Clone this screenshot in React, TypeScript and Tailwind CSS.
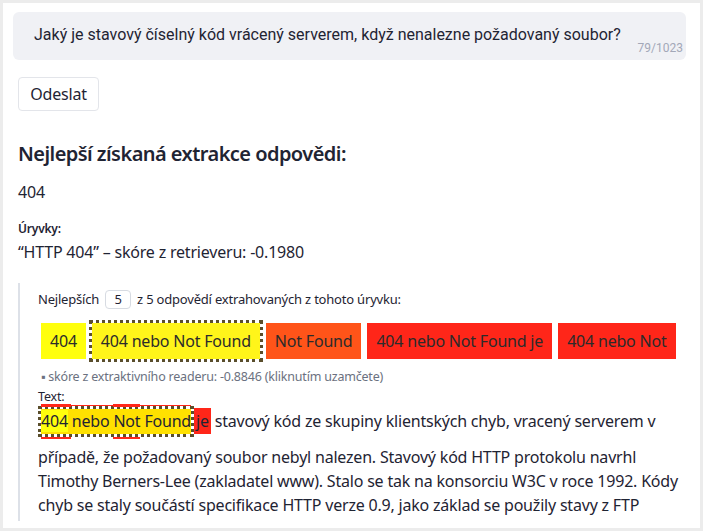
import React, { useState } from 'react';

const chips = [
  { text: '404', bg: 'bg-[#ffff0d]', sel: false },
  { text: '404 nebo Not Found', bg: 'bg-[#fff51a]', sel: true },
  { text: 'Not Found', bg: 'bg-[#ff5419]', sel: false },
  { text: '404 nebo Not Found je', bg: 'bg-[#ff2619]', sel: false },
  { text: '404 nebo Not', bg: 'bg-[#ff2619]', sel: false },
];

const App: React.FC = () => {
  const [question, setQuestion] = useState(
    'Jaký je stavový číselný kód vrácený serverem, když nenalezne požadovaný soubor?'
  );
  const [topK, setTopK] = useState('5');

  return (
    <div className="min-h-[531px] bg-[#ececec] p-[3px] font-['Noto_Sans',sans-serif] tracking-[-0.2px] text-[#1f2433]">
      <div className="h-[525px] overflow-hidden bg-white pl-[10px] pr-[14px] pt-[9px]">
        <div className="relative h-[48px] rounded-md bg-[#f0f1f5]">
          <textarea
            value={question}
            onChange={e => setQuestion(e.target.value)}
            rows={1}
            className="block h-[48px] w-full resize-none overflow-hidden bg-transparent px-[21px] pt-[11px] font-['Roboto',sans-serif] text-[16px] leading-[24px] tracking-normal text-[#1f2433] outline-none"
          />
          <span className="absolute bottom-[3px] right-[3px] font-['Roboto',sans-serif] text-[12px] tracking-normal text-[#a3a8b8]">
            {question.length}/1023
          </span>
        </div>

        <button className="ml-[5px] mt-[17px] h-[34px] w-[81px] rounded border border-[#e3e5ea] bg-white text-[16px] text-[#1f2433]">
          Odeslat
        </button>

        <div className="pl-[5px]">
          <h2 className="mt-[29px] text-[20px] font-semibold leading-[28px] tracking-[-0.55px]">
            Nejlepší získaná extrakce odpovědi:
          </h2>
          <div className="mt-[12px] text-[16px] leading-[24px]">404</div>
          <div className="mt-[16px] text-[12px] font-semibold leading-[18px]">Úryvky:</div>
          <div className="mt-[2px] text-[16px] leading-[24px]">“HTTP 404” – skóre z retrieveru: -0.1980</div>

          <div className="mt-[19px] h-[238px] overflow-hidden border-l-2 border-[#dde1e8] pl-[18px] pt-[6px]">
            <div className="flex items-center text-[13px] leading-[20px]">
              <span>Nejlepších</span>
              <input
                value={topK}
                onChange={e => setTopK(e.target.value)}
                className="mx-[6px] h-[19px] w-[26px] rounded border border-[#d7dbe2] text-center text-[13px] outline-none"
              />
              <span>z 5 odpovědí extrahovaných z tohoto úryvku:</span>
            </div>

            <div className="mt-[14px] flex">
              {chips.map((c, i) => (
                <span
                  key={i}
                  className={`mx-[3px] h-[36px] whitespace-nowrap px-[9px] text-[16px] leading-[36px] text-[#2b2b2b] ${c.bg} ${
                    c.sel ? 'outline-[3px] outline-dotted outline-[#5a4e2c]' : ''
                  }`}
                >
                  {c.text}
                </span>
              ))}
            </div>

            <div className="mt-[9px] pl-[3px] text-[12.5px] leading-[18px] text-[#6b7180]">
              ▪ skóre z extraktivního readeru: -0.8846 (kliknutím uzamčete)
            </div>
            <div className="mt-[2px] text-[12.5px] leading-[18px]">Text:</div>
            <p className="w-[642px] text-[16px] leading-[24px]">
              <span className="relative mb-[11px] ml-[3px] mt-[3px] inline-block bg-[#ffe100] leading-[25px] outline-[3px] outline-dotted outline-[#5a4e2c]">
                <span className="absolute -top-[4px] left-0 h-[1px] w-full bg-[#ff2619]"></span>
                <span className="absolute -top-[5px] left-0 h-[3px] w-[30px] bg-[#ff2619]"></span>
                <span className="absolute -top-[5px] left-[72px] h-[3px] w-[27px] bg-[#ff2619]"></span>
                <span className="absolute -bottom-[5px] left-0 h-[2px] w-[30px] bg-[#ff2619]"></span>
                <span className="absolute -bottom-[5px] left-[72px] h-[2px] w-[27px] bg-[#ff2619]"></span>
                <span className="bg-[#ffff0d]">404</span> nebo Not Found
              </span>
              <span className="ml-[3px] inline-block bg-[#ff2619] px-[2px] leading-[26px]">je</span> stavový kód ze
              skupiny klientských chyb, vracený serverem v případě, že požadovaný soubor nebyl nalezen. Stavový kód HTTP
              protokolu navrhl Timothy Berners-Lee (zakladatel www). Stalo se tak na konsorciu W3C v roce 1992. Kódy
              chyb se staly součástí specifikace HTTP verze 0.9, jako základ se použily stavy z FTP protokolu.
            </p>
          </div>
        </div>
      </div>
    </div>
  );
};

export default App;
